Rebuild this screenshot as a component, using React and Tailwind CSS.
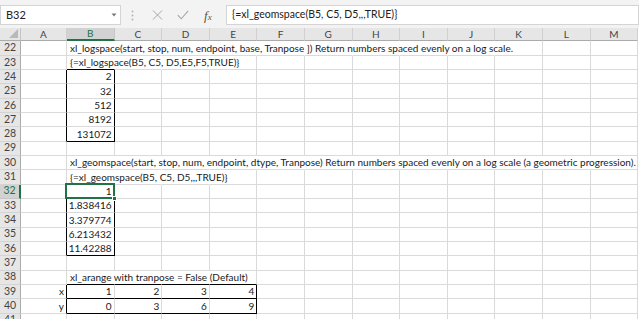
import React from 'react';

const COLS = ['A', 'B', 'C', 'D', 'E', 'F', 'G', 'H', 'I', 'J', 'K', 'L', 'M'];
const FIRST_ROW = 22;
const LAST_ROW = 41;

// cell contents by row -> column index (0 = A)
const CELLS = {
  22: { 1: { text: 'xl_logspace(start, stop, num, endpoint, base, Tranpose ]) Return numbers spaced evenly on a log scale.', cover: 10 } },
  23: { 1: { text: '{=xl_logspace(B5, C5, D5,E5,F5,TRUE)}', cover: 4 } },
  24: { 1: { text: '2', num: true } },
  25: { 1: { text: '32', num: true } },
  26: { 1: { text: '512', num: true } },
  27: { 1: { text: '8192', num: true } },
  28: { 1: { text: '131072', num: true } },
  30: { 1: { text: 'xl_geomspace(start, stop, num, endpoint, dtype, Tranpose) Return numbers spaced evenly on a log scale (a geometric progression).', cover: 12 } },
  31: { 1: { text: '{=xl_geomspace(B5, C5, D5,,,TRUE)}', cover: 4 } },
  32: { 1: { text: '1', num: true } },
  33: { 1: { text: '1.838416', num: true } },
  34: { 1: { text: '3.379774', num: true } },
  35: { 1: { text: '6.213432', num: true } },
  36: { 1: { text: '11.42288', num: true } },
  38: { 1: { text: 'xl_arange with tranpose = False (Default)', cover: 4 } },
  39: { 0: { text: 'x', num: true }, 1: { text: '1', num: true }, 2: { text: '2', num: true }, 3: { text: '3', num: true }, 4: { text: '4', num: true } },
  40: { 0: { text: 'y', num: true }, 1: { text: '0', num: true }, 2: { text: '3', num: true }, 3: { text: '6', num: true }, 4: { text: '9', num: true } },
};

// black outline borders
const BOXES = [
  { r1: 24, r2: 28, c1: 1, c2: 1 },
  { r1: 32, r2: 36, c1: 1, c2: 1 },
  { r1: 39, r2: 39, c1: 1, c2: 4 },
  { r1: 40, r2: 40, c1: 1, c2: 4 },
];

const SELECTED = { row: 32, col: 1 };

const rightBlack = (r, c) =>
  BOXES.some((b) => r >= b.r1 && r <= b.r2 && (c === b.c2 || c + 1 === b.c1));
const bottomBlack = (r, c) =>
  BOXES.some((b) => c >= b.c1 && c <= b.c2 && (r === b.r2 || r + 1 === b.r1));

const hiddenRight = (r, c) => {
  const row = CELLS[r] || {};
  return Object.entries(row).some(([col, cell]) => {
    const start = Number(col);
    return cell.cover && c >= start && c < start + cell.cover - 1;
  });
};

const Toolbar = () => (
  <div className="flex h-[28px] items-start bg-[#f3f3f3] pt-[5px]">
    <div className="flex h-[20px] w-[121px] items-center justify-between border border-[#d4d4d4] bg-white pl-[5px] pr-[3px] text-[11px] text-[#222]">
      <span>B32</span>
      <svg width="6" height="4" viewBox="0 0 6 4">
        <path d="M0.5 0.5 L5.5 0.5 L3 3.5 Z" fill="#7a7a7a" />
      </svg>
    </div>
    <div className="flex w-[22px] justify-center pt-[5px]">
      <svg width="3" height="11" viewBox="0 0 3 11">
        <circle cx="1.5" cy="1.5" r="1" fill="#b5b5b5" />
        <circle cx="1.5" cy="5.5" r="1" fill="#b5b5b5" />
        <circle cx="1.5" cy="9.5" r="1" fill="#b5b5b5" />
      </svg>
    </div>
    <div className="flex h-[20px] w-[80px] items-center bg-[#f3f3f3] pl-[9px] text-[#9a9a9a]">
      <svg width="11" height="10" viewBox="0 0 11 10" className="mr-[14px]">
        <path d="M1 0.5 L10 9.5 M10 0.5 L1 9.5" stroke="#a6a6a6" strokeWidth="1" fill="none" />
      </svg>
      <svg width="12" height="10" viewBox="0 0 12 10" className="mr-[15px]">
        <path d="M0.8 5.2 L4.2 8.8 L11.2 0.8" stroke="#a6a6a6" strokeWidth="1.1" fill="none" />
      </svg>
      <span className="font-['Liberation_Serif',serif] text-[13px] italic leading-none text-[#555]">
        f<span className="text-[9px]">x</span>
      </span>
    </div>
    <div className="ml-[3px] flex h-[20px] flex-1 items-center border border-[#d4d4d4] bg-white pl-[5px] text-[10.5px] text-[#222]">
      {'{=xl_geomspace(B5, C5, D5,,,TRUE)}'}
    </div>
  </div>
);

const HeaderRow = () => (
  <>
    <div className="flex items-end justify-end border-r border-b border-r-[#c6c6c6] border-b-[#ababab] bg-[#e6e6e6] pr-[2px] pb-[2px]">
      <svg width="9" height="9" viewBox="0 0 9 9">
        <path d="M9 0 L9 9 L0 9 Z" fill="#b9b9b9" />
      </svg>
    </div>
    {COLS.map((col, c) =>
      c === SELECTED.col ? (
        <div key={col} className="flex items-center justify-center border-r border-b-2 border-r-[#c6c6c6] border-b-[#217346] bg-[#d2d2d2] text-[#217346]">
          {col}
        </div>
      ) : (
        <div key={col} className="flex items-center justify-center border-r border-b border-r-[#d0d0d0] border-b-[#ababab] bg-[#e6e6e6] text-[#444]">
          {col}
        </div>
      )
    )}
  </>
);

const Cell = ({ r, c }) => {
  const cell = (CELLS[r] || {})[c];
  const rb = rightBlack(r, c) ? 'border-r-black' : hiddenRight(r, c) ? 'border-r-transparent' : 'border-r-[#dadada]';
  const bb = bottomBlack(r, c) ? 'border-b-black' : 'border-b-[#dadada]';
  const selected = r === SELECTED.row && c === SELECTED.col;
  return (
    <div
      className={`relative flex items-end whitespace-nowrap border-r border-b ${rb} ${bb} ${
        cell && cell.num ? 'justify-end pr-[2px]' : 'pl-[3px]'
      } ${selected ? 'z-10' : ''}`}
    >
      {cell && <span className="leading-[13px]">{cell.text}</span>}
      {selected && (
        <>
          <div className="pointer-events-none absolute -top-[2px] -left-[2px] -right-px -bottom-px border-2 border-[#217346]" />
          <div className="absolute -right-[3px] -bottom-[3px] h-[5px] w-[5px] border border-white bg-[#217346]" />
        </>
      )}
    </div>
  );
};

const RowHeader = ({ r }) =>
  r === SELECTED.row ? (
    <div className="flex items-center justify-center border-r-2 border-b border-r-[#217346] border-b-[#c6c6c6] bg-[#d2d2d2] text-[10.5px] text-[#217346]">
      {r}
    </div>
  ) : (
    <div className="flex items-center justify-center border-r border-b border-r-[#ababab] border-b-[#d4d4d4] bg-[#e6e6e6] text-[10.5px] text-[#444]">
      {r}
    </div>
  );

export default function App() {
  const rows = [];
  for (let r = FIRST_ROW; r <= LAST_ROW; r++) rows.push(r);

  return (
    <div className="h-[319px] w-[639px] overflow-hidden bg-white font-['Lato','Liberation_Sans',sans-serif] text-[10px] text-[#1a1a1a]">
      <Toolbar />
      <div className="grid grid-cols-[21px_46px_repeat(12,47.6px)] grid-rows-[13.4px_repeat(20,14.33px)] text-[10px]">
        <HeaderRow />
        {rows.map((r) => (
          <React.Fragment key={r}>
            <RowHeader r={r} />
            {COLS.map((col, c) => (
              <Cell key={col} r={r} c={c} />
            ))}
          </React.Fragment>
        ))}
      </div>
    </div>
  );
}
